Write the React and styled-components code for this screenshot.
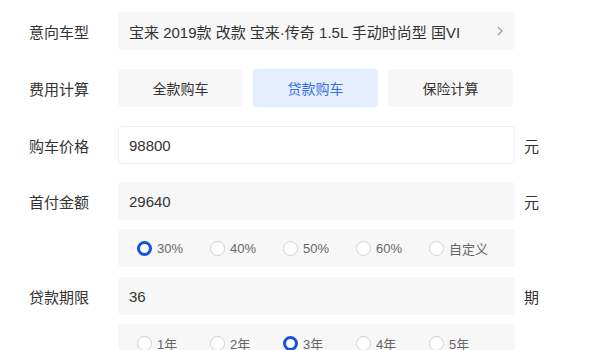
import React from "react";
import styled, { createGlobalStyle } from "styled-components";

const Global = createGlobalStyle`
  html, body { margin: 0; padding: 0; background: #fff; }
  body { font-family: "Noto Sans CJK SC", "Liberation Sans", sans-serif; color: #333; }
`;

const Form = styled.div`
  display: flex;
  flex-direction: column;
  padding: 12px 0 0 29px;
  width: 571px;
`;

const Row = styled.div`
  display: flex;
  align-items: center;
  height: 38px;
  margin-bottom: ${(p) => p.$gap}px;
`;

const Label = styled.div`
  width: 89px;
  font-size: 15px;
  color: #333;
  flex-shrink: 0;
  white-space: nowrap;
`;

const Field = styled.div`
  box-sizing: border-box;
  width: 397px;
  height: 38px;
  display: flex;
  align-items: center;
  padding: 0 10px;
  border-radius: 4px;
  background: ${(p) => (p.$white ? "#fff" : "#f7f7f8")};
  border: 1px solid ${(p) => (p.$white ? "#f0f0f2" : "#f7f7f8")};
  font-size: 15px;
  color: #333;
  font-family: "Liberation Sans", "Noto Sans CJK SC", sans-serif;
`;

const Value = styled.span`
  flex: 1;
  white-space: nowrap;
`;

const Unit = styled.span`
  margin-left: 9px;
  font-size: 15px;
  color: #333;
`;

const Buttons = styled.div`
  display: flex;
  gap: 10px;
`;

const Tab = styled.div`
  width: 125px;
  height: 38px;
  border-radius: 4px;
  display: flex;
  align-items: center;
  justify-content: center;
  font-size: 14px;
  background: ${(p) => (p.$active ? "#e5eefe" : "#f7f7f8")};
  color: ${(p) => (p.$active ? "#3a6ee8" : "#333")};
`;

const Options = styled.div`
  box-sizing: border-box;
  width: 397px;
  height: 38px;
  border-radius: 4px;
  background: #f7f7f8;
  display: flex;
  align-items: center;
  padding-left: 19px;
`;

const Option = styled.div`
  width: 73px;
  display: flex;
  align-items: center;
  gap: 5px;
  font-size: 13px;
  color: #666;
  font-family: "Liberation Sans", "Noto Sans CJK SC", sans-serif;
  flex-shrink: 0;
`;

const Dot = styled.span`
  box-sizing: border-box;
  width: 15px;
  height: 15px;
  border-radius: 50%;
  border: ${(p) => (p.$on ? "3px solid #1553dc" : "1px solid #cfd0d6")};
  background: #fff;
  flex-shrink: 0;
`;

const Chevron = () => (
  <svg width="8" height="12" viewBox="0 0 8 12">
    <path d="M2 2l4 4-4 4" fill="none" stroke="#999" strokeWidth="1.2" />
  </svg>
);

const pays = ["30%", "40%", "50%", "60%", "自定义"];
const years = ["1年", "2年", "3年", "4年", "5年"];

export default function App() {
  return (
    <>
      <Global />
      <Form>
        <Row $gap={19}>
          <Label>意向车型</Label>
          <Field>
            <Value>宝来 2019款 改款 宝来·传奇 1.5L 手动时尚型 国VI</Value>
            <Chevron />
          </Field>
        </Row>
        <Row $gap={19}>
          <Label>费用计算</Label>
          <Buttons>
            <Tab>全款购车</Tab>
            <Tab $active>贷款购车</Tab>
            <Tab>保险计算</Tab>
          </Buttons>
        </Row>
        <Row $gap={18}>
          <Label>购车价格</Label>
          <Field $white>
            <Value>98800</Value>
          </Field>
          <Unit>元</Unit>
        </Row>
        <Row $gap={9}>
          <Label>首付金额</Label>
          <Field>
            <Value>29640</Value>
          </Field>
          <Unit>元</Unit>
        </Row>
        <Row $gap={10}>
          <Label />
          <Options>
            {pays.map((p, i) => (
              <Option key={p}>
                <Dot $on={i === 0} />
                {p}
              </Option>
            ))}
          </Options>
        </Row>
        <Row $gap={9}>
          <Label>贷款期限</Label>
          <Field>
            <Value>36</Value>
          </Field>
          <Unit>期</Unit>
        </Row>
        <Row $gap={0}>
          <Label />
          <Options>
            {years.map((p, i) => (
              <Option key={p}>
                <Dot $on={i === 2} />
                {p}
              </Option>
            ))}
          </Options>
        </Row>
      </Form>
    </>
  );
}
